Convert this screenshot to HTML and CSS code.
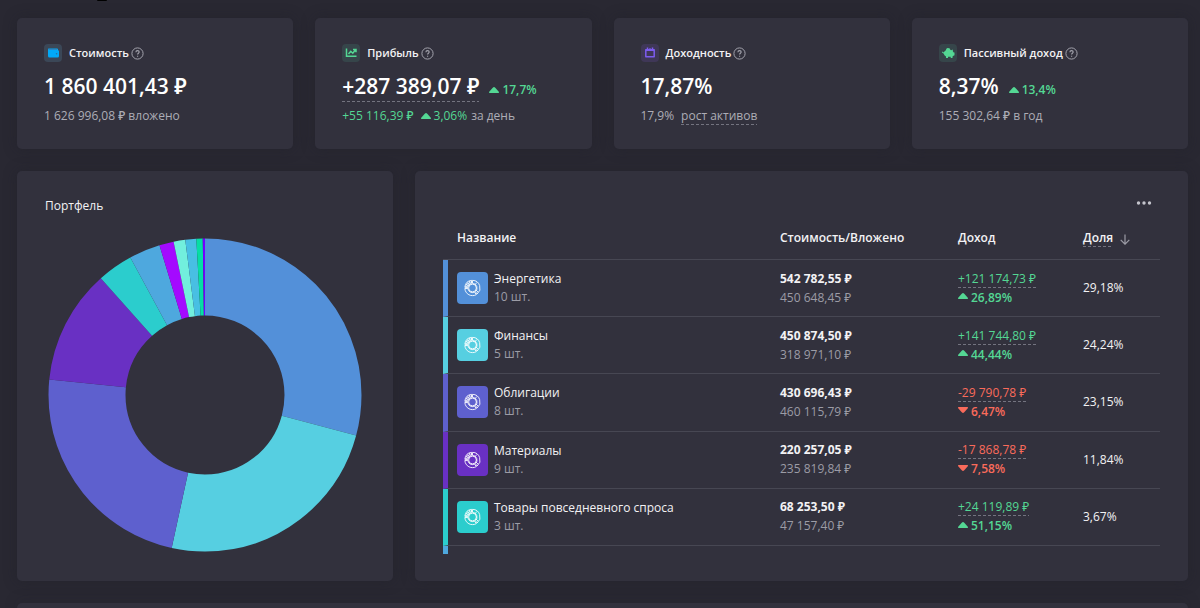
FILE: index.html
```html
<!DOCTYPE html>
<html lang="ru">
<head>
<meta charset="utf-8">
<meta name="viewport" content="width=device-width, initial-scale=1">
<title>Портфель</title>
<link rel="stylesheet" href="styles.css">
</head>
<body>
<svg width="0" height="0" class="defs" aria-hidden="true">
  <symbol id="help" viewBox="0 0 13 13"><circle cx="6.5" cy="6.5" r="5.6" fill="none" stroke="currentColor"/><path d="M4.9 5.2c0-2.2 3.3-2.1 3.3-.1 0 1.200-1.600 1.200-1.600 2.400M6.600 8.700v1.100" fill="none" stroke="currentColor" stroke-width="1.100"/></symbol>
  <symbol id="up" viewBox="0 0 10 6"><path d="M5 0Q5.500 0 6.500 1L10 5Q10 6 9.500 6H.5Q0 6 0 5L3.500 1Q4.500 0 5 0Z" fill="currentColor"/></symbol>
  <symbol id="down" viewBox="0 0 10 6"><path d="M5 6Q5.500 6 6.500 5L10 1Q10 0 9.500 0H.5Q0 0 0 1L3.500 5Q4.500 6 5 6Z" fill="currentColor"/></symbol>
  <symbol id="ring" viewBox="0 0 18 18"><g fill="none" stroke="#fff" stroke-opacity=".9"><path d="M9 1.100A7.900 7.900 0 0 1 13.800 15.200L11.900 12.700A4.800 4.800 0 0 0 9 4.200Z"/><path d="M13 15.800A7.900 7.900 0 0 1 1.100 9.500H4.200A4.800 4.800 0 0 0 11 13.300Z"/><path d="M1.100 8.300A7.900 7.900 0 0 1 8 1.100V4.200A4.800 4.800 0 0 0 4.200 8.300Z"/><circle cx="9" cy="9" r="4"/><path d="M2.700 8.300A6.300 6.300 0 0 1 8 2.700" stroke-width="2.400" stroke-dasharray="1.200 .7"/><path d="M11.500 5.500l2.200-2.300M12.500 11l2.200 2.200"/></g></symbol>
</svg>
<header class="page-head"><span class="page-mark"></span></header>
<main class="page">
  <section class="stats">
    <article class="card stat">
      <h2 class="stat-title"><svg class="badge badge-blue" viewBox="0 0 18 18" aria-hidden="true"><path d="M4.500 4.500h8.500q1 0 1 1v.8q1 .2 1 1v4.700q0 1.500-1.500 1.500H5.500Q4 13.500 4 12V5Z" fill="#02a9f7"/><path d="M4.500 5.500h8.500" stroke="#2b86c5"/><circle cx="12.600" cy="9.700" r=".8" fill="#2b6fa0"/></svg>Стоимость<button class="help" type="button" aria-label="Подсказка"><svg><use href="#help"/></svg></button></h2>
      <p class="value">1 860 401,43 ₽</p>
      <p class="note">1 626 996,08 ₽ вложено</p>
    </article>
    <article class="card stat">
      <h2 class="stat-title"><svg class="badge badge-green" viewBox="0 0 18 18" aria-hidden="true"><path d="M4.500 4.500v7.800h10M6.500 10l2.300-2.700 2 1.900 2.700-3.400M11 5.500h3v2.800" fill="none" stroke="#54d794" stroke-width="1.500"/></svg>Прибыль<button class="help" type="button" aria-label="Подсказка"><svg><use href="#help"/></svg></button></h2>
      <p class="value"><span class="dashed">+287 389,07 ₽</span><span class="delta green"><svg class="tri"><use href="#up"/></svg>17,7%</span></p>
      <p class="note"><span class="green">+55 116,39 ₽</span> <span class="change green"><svg class="tri"><use href="#up"/></svg>3,06%</span> за день</p>
    </article>
    <article class="card stat">
      <h2 class="stat-title"><svg class="badge badge-violet" viewBox="0 0 18 18" aria-hidden="true"><path d="M4.800 5.800h8.400v7H4.800ZM6.500 3.500v2M9 4.200v1M11.500 3.500v2M4.800 6.200h8.400" fill="none" stroke="#7d5cf0" stroke-width="1.500" stroke-linejoin="round"/></svg>Доходность<button class="help" type="button" aria-label="Подсказка"><svg><use href="#help"/></svg></button></h2>
      <p class="value">17,87%</p>
      <p class="note">17,9% <span class="dashed growth">рост активов</span></p>
    </article>
    <article class="card stat">
      <h2 class="stat-title"><svg class="badge badge-green" viewBox="0 0 18 18" aria-hidden="true"><path d="M3.300 7.500l1.600 1q.4-1.600 2-2.300Q7 4.600 8.500 4l2 .2 1 1.800.8.3 1.500-.8v1.700l.9 1.300h.8v2.700l-1.500.7-.5.800V14h-1.800v-1.200H9V14H7v-1.500Q5 11.500 4.800 9.700L3 8.500Z" fill="#54d794"/></svg>Пассивный доход<button class="help" type="button" aria-label="Подсказка"><svg><use href="#help"/></svg></button></h2>
      <p class="value">8,37%<span class="delta green"><svg class="tri"><use href="#up"/></svg>13,4%</span></p>
      <p class="note">155 302,64 ₽ в год</p>
    </article>
  </section>
  <section class="details">
    <article class="card portfolio">
      <h2 class="portfolio-title">Портфель</h2>
      <svg class="donut" viewBox="0 0 314 314" role="img" aria-label="Структура портфеля">
        <g fill="none" stroke-width="77" transform="rotate(-90 157 157)">
          <circle cx="157" cy="157" r="118" pathLength="100" stroke="#5390d9" stroke-dasharray="29.18 70.82"/>
          <circle cx="157" cy="157" r="118" pathLength="100" stroke="#56cfe1" stroke-dasharray="24.24 75.76" stroke-dashoffset="-29.18"/>
          <circle cx="157" cy="157" r="118" pathLength="100" stroke="#5e60ce" stroke-dasharray="23.15 76.85" stroke-dashoffset="-53.42"/>
          <circle cx="157" cy="157" r="118" pathLength="100" stroke="#6930c3" stroke-dasharray="11.84 88.16" stroke-dashoffset="-76.57"/>
          <circle cx="157" cy="157" r="118" pathLength="100" stroke="#2bcdcd" stroke-dasharray="3.67 96.33" stroke-dashoffset="-88.41"/>
          <circle cx="157" cy="157" r="118" pathLength="100" stroke="#4ea8de" stroke-dasharray="3.22 96.78" stroke-dashoffset="-92.08"/>
          <circle cx="157" cy="157" r="118" pathLength="100" stroke="#a40aff" stroke-dasharray="1.48 98.52" stroke-dashoffset="-95.3"/>
          <circle cx="157" cy="157" r="118" pathLength="100" stroke="#72efdd" stroke-dasharray="1.2 98.8" stroke-dashoffset="-96.78"/>
          <circle cx="157" cy="157" r="118" pathLength="100" stroke="#48bfe3" stroke-dasharray="1.13 98.87" stroke-dashoffset="-97.98"/>
          <circle cx="157" cy="157" r="118" pathLength="100" stroke="#06dea4" stroke-dasharray="0.66 99.34" stroke-dashoffset="-99.11"/>
          <circle cx="157" cy="157" r="118" pathLength="100" stroke="#7400ff" stroke-dasharray="0.23 99.77" stroke-dashoffset="-99.77"/>
        </g>
      </svg>
    </article>
    <article class="card holdings">
      <div class="toolbar"><button class="more" type="button" aria-label="Меню"><svg viewBox="0 0 16 4"><g fill="#c4c4cc"><circle cx="2.500" cy="2" r="1.700"/><circle cx="8" cy="2" r="1.700"/><circle cx="13.500" cy="2" r="1.700"/></g></svg></button></div>
      <table class="table">
        <colgroup><col class="col-name"><col class="col-cost"><col class="col-income"><col class="col-share"></colgroup>
        <thead><tr><th scope="col">Название</th><th scope="col">Стоимость/Вложено</th><th scope="col">Доход</th><th scope="col"><button class="sort" type="button"><span class="dashed">Доля</span><svg viewBox="0 0 10 11"><path d="M5 .5v9.500M.7 5.800 5 10.200l4.300-4.400" fill="none" stroke="#9c9ca6" stroke-width="1.200"/></svg></button></th></tr></thead>
        <tbody>
          <tr class="c-blue"><td><div class="asset"><svg class="tile" viewBox="-7 -7 32 32"><use href="#ring" width="18" height="18"/></svg><div>Энергетика<small>10 шт.</small></div></div></td><td><b>542 782,55 ₽</b><small>450 648,45 ₽</small></td><td class="green"><span class="dashed">+121 174,73 ₽</span><strong><svg class="tri"><use href="#up"/></svg>26,89%</strong></td><td>29,18%</td></tr>
          <tr class="c-cyan"><td><div class="asset"><svg class="tile" viewBox="-7 -7 32 32"><use href="#ring" width="18" height="18"/></svg><div>Финансы<small>5 шт.</small></div></div></td><td><b>450 874,50 ₽</b><small>318 971,10 ₽</small></td><td class="green"><span class="dashed">+141 744,80 ₽</span><strong><svg class="tri"><use href="#up"/></svg>44,44%</strong></td><td>24,24%</td></tr>
          <tr class="c-indigo"><td><div class="asset"><svg class="tile" viewBox="-7 -7 32 32"><use href="#ring" width="18" height="18"/></svg><div>Облигации<small>8 шт.</small></div></div></td><td><b>430 696,43 ₽</b><small>460 115,79 ₽</small></td><td class="red"><span class="dashed">-29 790,78 ₽</span><strong><svg class="tri"><use href="#down"/></svg>6,47%</strong></td><td>23,15%</td></tr>
          <tr class="c-violet"><td><div class="asset"><svg class="tile" viewBox="-7 -7 32 32"><use href="#ring" width="18" height="18"/></svg><div>Материалы<small>9 шт.</small></div></div></td><td><b>220 257,05 ₽</b><small>235 819,84 ₽</small></td><td class="red"><span class="dashed">-17 868,78 ₽</span><strong><svg class="tri"><use href="#down"/></svg>7,58%</strong></td><td>11,84%</td></tr>
          <tr class="c-teal"><td><div class="asset"><svg class="tile" viewBox="-7 -7 32 32"><use href="#ring" width="18" height="18"/></svg><div>Товары повседневного спроса<small>3 шт.</small></div></div></td><td><b>68 253,50 ₽</b><small>47 157,40 ₽</small></td><td class="green"><span class="dashed">+24 119,89 ₽</span><strong><svg class="tri"><use href="#up"/></svg>51,15%</strong></td><td>3,67%</td></tr>
        </tbody>
      </table>
      <div class="next-row"></div>
    </article>
  </section>
  <section class="card next-card"></section>
</main>
</body>
</html>
```
FILE: styles.css
```css
* { box-sizing: border-box; }
body {
  margin: 0;
  background: #292832;
  color: #f2f2f4;
  font: 12px/18px "Open Sans", "Noto Sans", sans-serif;
}
h2, p { margin: 0; }
button { margin: 0; padding: 0; border: 0; background: none; color: inherit; font: inherit; cursor: pointer; }
svg { display: block; flex: none; }
small { display: block; font-size: 12px; color: #9c9ca6; }
.defs { position: absolute; }
.green { color: #54d794; }
.red { color: #fa6b5b; }
.dashed {
  background: repeating-linear-gradient(90deg, #73737f 0 3px, transparent 3px 5px) left bottom / 100% 1px no-repeat;
}
.page-head { height: 18px; padding-left: 97px; }
.page-mark { display: block; width: 10px; height: 1px; border-radius: 0 0 6px 6px; background: #000; }
.page { padding: 0 12px 0 17px; display: grid; gap: 22px; }
.card { background: #32313d; border-radius: 5px; box-shadow: 0 0 14px rgba(30, 29, 38, .35); min-width: 0; }
.stats { display: grid; grid-template-columns: repeat(4, 1fr); gap: 22px; }
.stat { padding: 26px 27px 24px; }
.stat-title { display: flex; align-items: center; font-size: 11px; line-height: 18px; font-weight: 600; }
.badge { width: 18px; height: 18px; margin-right: 7px; border-radius: 4px; }
.badge-blue { background: #3b4757; }
.badge-green { background: #36454a; }
.badge-violet { background: #3f3757; }
.help { margin-left: 2px; color: #a3a3ad; }
.help svg { width: 13px; height: 13px; }
.value { display: flex; align-items: center; margin-top: 8px; font-size: 21px; line-height: 32px; font-weight: 600; color: #fff; }
.delta { display: flex; align-items: center; gap: 3px; margin: 7px 0 0 10px; font-size: 12px; line-height: 18px; font-weight: 600; color: #54d794; }
.tri { width: 10px; height: 6px; }
.note { display: flex; align-items: center; gap: 4px; margin-top: 5px; font-weight: 500; color: #adadb6; }
.change { display: flex; align-items: center; gap: 3px; margin-left: 3px; }
.growth { margin-left: 3px; }
.details { display: grid; grid-template-columns: 376fr 773fr; gap: 22px; }
.portfolio { padding: 26px 28px 29px; }
.portfolio-title { font-size: 12px; line-height: 18px; font-weight: 500; }
.donut { display: block; width: 100%; max-width: 314px; margin: 23px auto 0; }
.holdings { padding: 24px 28px 26px; }
.toolbar { display: flex; justify-content: flex-end; padding-right: 8px; }
.more { height: 16px; }
.more svg { width: 16px; height: 4px; }
.table { width: 100%; height: 335px; table-layout: fixed; border-collapse: separate; border-spacing: 0; }
.col-cost { width: 178px; }
.col-income { width: 125px; }
.col-share { width: 77px; }
.table th { height: 49px; padding: 5px 0 0; text-align: left; font-weight: 600; border-bottom: 1px solid #474753; }
.table td { padding: 0; border-bottom: 1px solid #474753; vertical-align: middle; }
.table th:first-child { padding-left: 14px; }
.table td:first-child { padding-left: 9px; border-left: 5px solid var(--tone); }
.table b { display: block; font-weight: 700; }
.table strong { display: flex; align-items: center; gap: 3px; font-weight: 600; line-height: 19px; }
.table strong svg { margin-bottom: 2px; }
.table td > small { line-height: 19px; }
.table td .dashed { display: inline-block; }
.asset { display: flex; align-items: center; gap: 6px; }
.tile { width: 31px; height: 32px; border-radius: 4px; background: var(--tone); }
.sort { display: flex; align-items: center; gap: 7px; font-weight: 600; }
.sort svg { width: 10px; height: 11px; margin-top: 3px; }
.c-blue { --tone: #5390d9; }
.c-cyan { --tone: #56cfe1; }
.c-indigo { --tone: #5e60ce; }
.c-violet { --tone: #6930c3; }
.c-teal { --tone: #2bcdcd; }
.next-row { width: 5px; height: 8px; background: #4ea8de; }
.next-card { height: 5px; border-radius: 5px 5px 0 0; }
```
